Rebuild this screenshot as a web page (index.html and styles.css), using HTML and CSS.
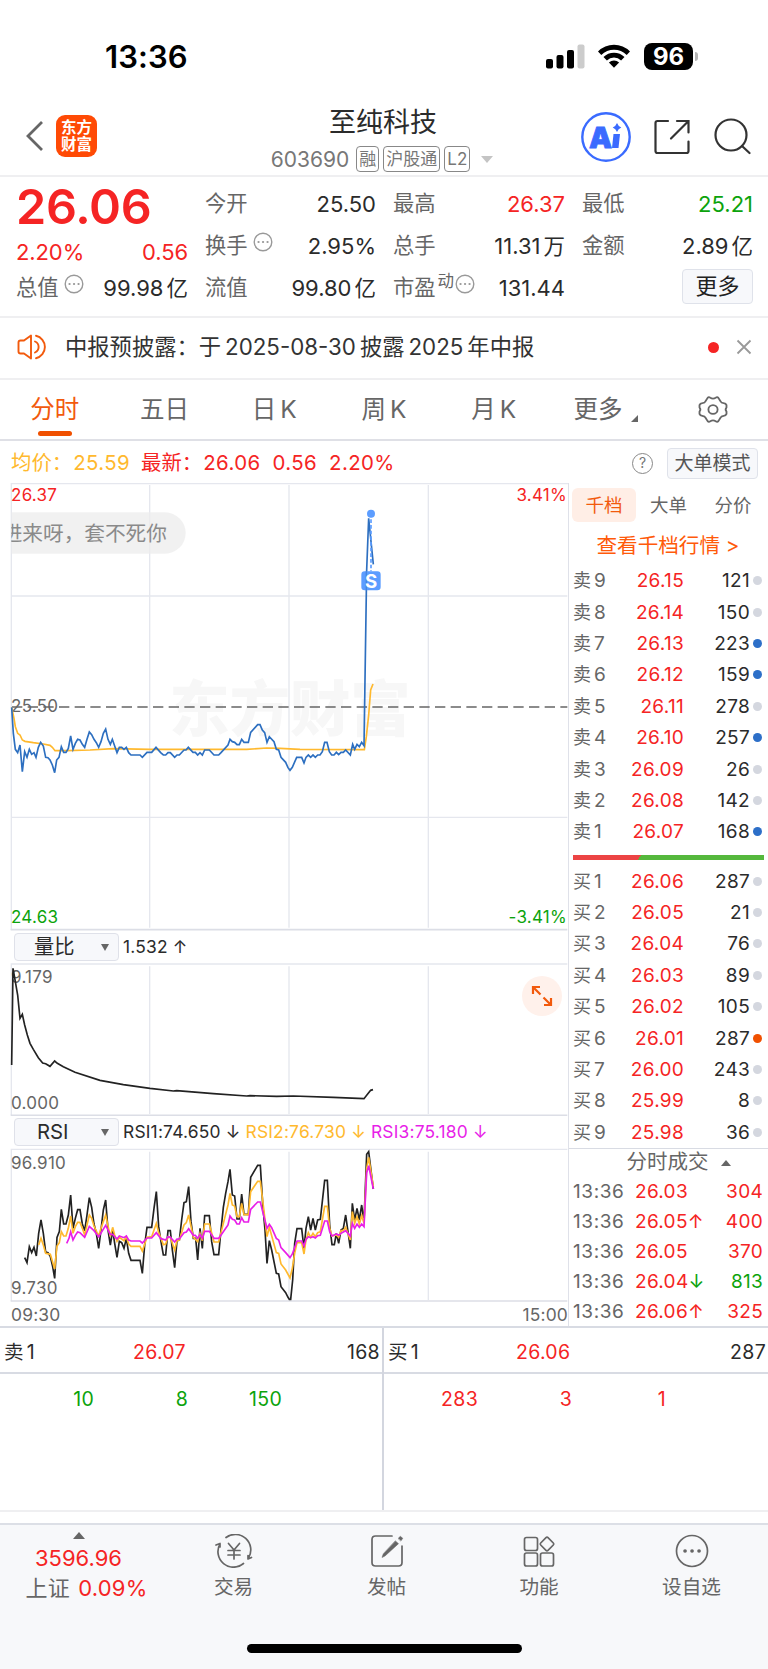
FILE: index.html
```html
<!DOCTYPE html>
<html lang="zh-CN">
<head>
    <meta charset="UTF-8">
    <meta name="viewport" content="width=device-width, initial-scale=1.0">
    <title>至纯科技 603690</title>
    <link rel="stylesheet" href="styles.css">
</head>

<body>
    <div class="status-bar">
        <span class="clock">13:36</span>
        <div class="status-icons">
            <svg class="signal" width="39" height="25" viewBox="0 0 39 25">
                <rect x="0" y="15" width="7" height="9.500" rx="2"/>
                <rect x="10.500" y="11" width="7" height="13.500" rx="2"/>
                <rect x="21" y="6" width="7" height="18.500" rx="2"/>
                <rect x="31.500" y="0.500" width="7" height="24" rx="2" fill="#ccc"/>
            </svg>
            <svg class="wifi" width="34" height="25" viewBox="0 0 34 25">
                <path d="M1 8.500a22.600 22.600 0 0 1 32 0l-3.300 3.400a18 18 0 0 0-25.400 0z"/>
                <path d="M6.500 14a14.800 14.800 0 0 1 21 0l-3.400 3.400a10.200 10.200 0 0 0-14.200 0z"/>
                <path d="M11.900 19.500a7.300 7.300 0 0 1 10.200 0L17 24.800z"/>
            </svg>
            <span class="battery">96</span><span class="battery-tip"></span>
        </div>
    </div>

    <header class="header">
        <div class="header-left">
            <svg width="20" height="34" viewBox="0 0 20 34"><path d="M17 3L3 17l14 14" fill="none" stroke="#666" stroke-width="2.800"/></svg>
            <div class="logo">东方<br>财富</div>
        </div>
        <div class="header-title">
            <h1>至纯科技</h1>
            <div class="code-row">
                <span class="code">603690</span>
                <span class="tag">融</span>
                <span class="tag">沪股通</span>
                <span class="tag">L2</span>
                <span class="arrow-down"></span>
            </div>
        </div>
        <div class="header-actions">
            <svg width="52" height="52" viewBox="0 0 52 52">
                <circle cx="26" cy="26" r="23.700" fill="none" stroke="#3a6bff" stroke-width="2.400"/>
                <text x="9" y="36.500" class="ai-text">A</text>
                <path d="M33.500 23h6.500l-1.500 14h-6.500z" fill="#3a6bff"/>
                <path d="M37 12q1.200 3.300 4.300 4.500-3.100 1.200-4.300 4.500-1.200-3.300-4.300-4.500 3.100-1.200 4.300-4.500z" fill="#3a6bff"/>
            </svg>
            <svg width="36" height="36" viewBox="0 0 36 36" fill="none" stroke="#333" stroke-width="2.200" stroke-linecap="round">
                <path d="M14 2H3.500Q1.500 2 1.500 4v28q0 2 2 2h29q2 0 2-2V22.500"/>
                <path d="M23 2h11.500v11.500M34 2.500L17 19.500"/>
            </svg>
            <svg class="search" width="37" height="37" viewBox="0 0 37 37" fill="none" stroke="#333" stroke-width="2.200" stroke-linecap="round">
                <circle cx="17" cy="17" r="15.500"/>
                <path d="M28 28l7.500 7"/>
            </svg>
        </div>
    </header>

    <section class="quote">
        <div class="quote-main">
            <div class="price red">26.06</div>
            <div class="cell red change"><span>2.20%</span><span>0.56</span></div>
            <div class="cell"><label>总值</label><svg class="info" viewBox="0 0 20 20"><circle cx="10" cy="10" r="8.800"/><path d="M5.500 10h.1M10 10h.1M14.500 10h.1"/></svg><b>99.98<i>亿</i></b></div>
        </div>
        <div class="quote-grid">
            <div class="cell"><label>今开</label><b>25.50</b></div>
            <div class="cell"><label>最高</label><b class="red">26.37</b></div>
            <div class="cell"><label>最低</label><b class="green">25.21</b></div>
            <div class="cell"><label>换手</label><svg class="info wide" viewBox="0 0 20 20"><circle cx="10" cy="10" r="8.800"/><path d="M5.500 10h.1M10 10h.1M14.500 10h.1"/></svg><b>2.95%</b></div>
            <div class="cell"><label>总手</label><b>11.31<i>万</i></b></div>
            <div class="cell"><label>金额</label><b>2.89<i>亿</i></b></div>
            <div class="cell"><label>流值</label><b>99.80<i>亿</i></b></div>
            <div class="cell"><label>市盈</label><sup>动</sup><svg class="info tight" viewBox="0 0 20 20"><circle cx="10" cy="10" r="8.800"/><path d="M5.500 10h.1M10 10h.1M14.500 10h.1"/></svg><b>131.44</b></div>
            <div class="cell"><button class="more-btn">更多</button></div>
        </div>
    </section>

    <section class="notice">
        <svg width="31" height="26" viewBox="0 0 31 26" fill="none" stroke="#f25a0d" stroke-width="1.900" stroke-linecap="round" stroke-linejoin="round">
            <path d="M14 1.500v23l-7-5H3.500q-2 0-2-2v-9q0-2 2-2H7z"/>
            <path d="M18 7.500a6 6 0 0 1 0 11M19 1.800a11.500 11.500 0 0 1 0 22.400"/>
        </svg>
        <span class="notice-text">中报预披露：<i>于</i><i>2025-08-30</i><i>披露</i><i>2025</i><i>年中报</i></span>
        <span class="red-dot"></span>
        <svg width="16" height="16" viewBox="0 0 16 16"><path d="M1.500 1.500l13 13M14.500 1.500l-13 13" stroke="#999" stroke-width="1.800"/></svg>
    </section>

    <nav class="tabs">
        <span class="active">分时</span>
        <span>五日</span>
        <span>日<i>K</i></span>
        <span>周<i>K</i></span>
        <span>月<i>K</i></span>
        <span class="tab-more">更多<em></em></span>
        <span>
            <svg width="30" height="29" viewBox="1 0 28 28" preserveAspectRatio="none" fill="none" stroke="#666" stroke-width="1.700" stroke-linejoin="round">
                <path d="M10 2.800Q11 1.500 12.500 2.600Q15 4.200 17.500 2.600Q19 1.500 20 2.800L22 6Q22.600 7.600 25 7.900Q27 8 27.600 9.800L27.600 12Q26 14 27.600 16L27.600 18.200Q27 20 25 20.100Q22.600 20.400 22 22L20 25.200Q19 26.500 17.500 25.400Q15 23.800 12.500 25.400Q11 26.500 10 25.200L8 22Q7.400 20.400 5 20.100Q3 20 2.400 18.200L2.400 16Q4 14 2.400 12L2.400 9.800Q3 8 5 7.900Q7.400 7.600 8 6z"/>
                <circle cx="15" cy="14" r="4.300"/>
            </svg>
        </span>
    </nav>

    <div class="legend">
        <span class="yellow">均价：<i>25.59</i></span>
        <span class="bright">最新：<i>26.06</i><i>0.56</i><i>2.20%</i></span>
        <span class="help">?</span>
        <button class="mode-btn">大单模式</button>
    </div>

    <main class="board">
        <div class="charts">
            <!-- chart units: 3 per pixel -->
            <svg class="chart" width="568" height="448" viewBox="0 39 1704 1344">
                <text x="508" y="782" class="watermark">东方财富</text>
                <g class="grid">
                    <path d="M32 41H1704M34 41V1380M449 45V1373M867 45V1373M1285 45V1373M34 378H1702M34 1042H1702"/>
                    <path d="M32 1379H1702" class="base"/>
                </g>
                <path d="M36 711H1702" stroke="#666" stroke-width="5" stroke-dasharray="31 16"/>
                <path d="M34 127H495A62 62 0 0 1 495 251H34z" fill="#ececec" opacity=".75"/>
                <svg x="34" y="127" width="530" height="124" viewBox="34 127 530 124">
                    <text x="5" y="212" class="bubble-text">进来呀，套不死你</text>
                </svg>
                <text x="33" y="94" class="label lred">26.37</text>
                <text x="1701" y="94" class="label lred" text-anchor="end">3.41%</text>
                <text x="33" y="725" class="label">25.50</text>
                <text x="33" y="1359" class="label lgreen">24.63</text>
                <text x="1701" y="1359" class="label lgreen" text-anchor="end">-3.41%</text>
                <polyline class="line" stroke="#ffb92e" points="35,712 42,745 46,770 53,790 60,795 67,810 75,814 100,818 130,822 150,826 157,832 165,842 200,842 270,840 340,836 450,838 740,838 800,834 840,835 900,838 1093,839 1099,800 1106,735 1112,660 1119,642"/>
                <polyline class="line" stroke="#2d6fc0" points="35,712 40,790 46,838 53,848 60,825 67,905 74,845 81,862 88,838 95,853 102,848 108,862 115,832 122,817 130,828 137,862 144,863 150,870 157,885 164,908 170,870 177,862 184,830 191,847 198,847 205,835 212,798 219,838 226,820 233,808 240,810 247,823 254,832 261,808 268,786 275,794 282,808 289,818 296,832 303,815 310,790 317,777 324,808 331,823 337,808 344,828 351,848 358,832 365,832 372,838 379,832 386,848 393,855 420,855 427,862 441,847 455,847 468,832 482,848 490,855 497,855 504,848 511,848 524,862 531,855 538,855 552,840 558,840 565,832 579,847 586,847 593,855 600,848 607,855 614,840 628,840 642,855 656,855 663,848 684,825 690,808 697,815 704,817 711,824 718,824 725,808 732,817 745,817 752,787 773,764 780,764 787,780 794,788 801,817 808,800 822,815 829,838 836,840 843,862 857,877 864,893 870,901 877,892 890,862 905,862 912,879 918,862 925,855 932,862 939,855 946,862 953,855 960,855 967,845 974,817 981,817 988,845 995,855 1002,855 1009,847 1016,854 1023,847 1030,847 1037,840 1051,855 1058,823 1064,838 1071,823 1078,830 1085,817 1092,827 1100,300 1106,145 1120,283"/>
                <path d="M1113 131V304" stroke="#5c9dff" stroke-width="5" stroke-dasharray="11 6"/>
                <circle cx="1113" cy="131" r="12" fill="#5c9dff"/>
                <rect x="1084" y="304" width="58" height="57" rx="10" fill="#5c9dff"/>
                <path d="M1099 304V361" stroke="#2d6fc0" stroke-width="4" opacity=".5"/>
                <text x="1113" y="353" class="badge-text">S</text>
            </svg>

            <div class="indicator">
                <span class="select">量比<em></em></span>
                <span>1.532 ↑</span>
            </div>
            <div class="sub-chart">
                <svg class="chart" width="568" height="153" viewBox="0 249 1704 459">
                    <g class="grid">
                        <path d="M32 252H1702M34 252V705M449 259V702M867 259V702M1285 259V702"/>
                        <path d="M32 706H1702" class="base"/>
                    </g>
                    <text x="33" y="309" class="label">9.179</text>
                    <text x="33" y="686" class="label">0.000</text>
                    <polyline class="line" stroke="#222" points="35,555 39,265 46,305 53,345 60,415 67,403 74,435 82,465 90,490 100,508 115,533 128,549 137,551 150,559 164,543 172,550 190,560 225,577 300,601 370,614 450,625 520,633 530,632 640,641 740,648 750,647 830,649 880,648 1000,652 1092,656 1100,646 1112,631 1119,629"/>
                </svg>
                <span class="expand">
                    <svg width="22" height="22" viewBox="0 0 22 22" fill="none" stroke="#f25a0d" stroke-width="2.200"><path d="M2 9V2h7M2.500 2.500l7 7M20 13v7h-7M19.500 19.500l-7-7"/></svg>
                </span>
            </div>

            <div class="indicator rsi">
                <span class="select">RSI<em></em></span>
                <span>RSI1:74.650 ↓</span>
                <span class="yellow">RSI2:76.730 ↓</span>
                <span class="magenta">RSI3:75.180 ↓</span>
            </div>
            <svg class="chart" width="568" height="154" viewBox="0 84 1704 462">
                <g class="grid">
                    <path d="M32 88H1702M34 88V543M449 95V540M867 95V540M1285 95V540"/>
                    <path d="M32 543H1702" class="base"/>
                </g>
                <text x="33" y="146" class="label">96.910</text>
                <text x="33" y="522" class="label">9.730</text>
                <polyline class="line" stroke="#222" points="74,413 81,428 88,380 95,398 102,382 109,408 116,340 123,300 130,340 137,396 144,398 151,410 158,440 164,475 171,352 178,335 184,268 191,312 198,312 205,285 212,225 219,325 226,295 233,269 240,269 247,312 254,332 261,285 268,233 275,262 282,312 289,340 296,385 303,330 310,270 317,240 324,330 331,375 338,330 344,370 351,412 358,364 365,368 372,385 379,355 386,400 393,421 420,421 427,460 434,375 441,322 455,322 462,265 469,215 476,320 483,365 490,405 497,405 504,332 511,332 517,390 524,443 531,362 538,360 545,300 552,248 559,245 566,200 573,305 580,355 587,355 593,420 600,325 607,385 614,287 628,287 635,365 642,404 656,404 663,330 670,262 677,220 684,185 690,148 697,225 704,228 711,297 718,297 725,222 732,283 745,283 752,172 773,136 781,136 788,250 795,330 801,430 808,362 815,390 829,460 836,462 843,500 857,518 864,532 868,538 872,538 878,480 884,370 891,326 905,326 912,385 918,325 925,290 932,330 939,295 946,330 953,300 961,298 968,235 974,181 982,181 989,315 996,374 1003,374 1009,340 1016,370 1023,330 1030,325 1037,285 1051,385 1057,250 1064,300 1071,265 1078,300 1085,255 1092,305 1100,103 1106,95 1120,207"/>
                <polyline class="line" stroke="#ffb92e" points="116,375 123,355 130,375 137,400 151,403 164,447 171,378 178,368 184,335 191,348 198,348 205,325 212,288 219,340 226,320 233,307 240,307 247,325 254,345 261,315 268,285 275,295 282,318 296,348 303,325 317,285 331,350 338,322 344,345 351,364 358,352 372,362 379,350 386,372 393,379 420,379 427,393 441,352 455,350 469,310 476,338 490,374 497,372 504,350 511,352 524,390 531,362 538,360 552,315 559,308 566,285 580,352 593,365 600,340 607,362 614,312 628,312 642,366 656,366 670,310 684,255 690,220 697,255 704,258 711,290 718,290 725,250 732,284 745,284 752,215 773,184 781,184 788,240 801,350 808,322 829,398 836,400 843,432 857,450 870,474 877,445 884,400 891,368 905,368 912,402 918,360 925,338 932,352 939,340 946,350 953,338 961,335 967,300 974,259 982,259 989,325 996,348 1009,345 1016,352 1023,332 1030,332 1037,322 1051,360 1057,275 1064,310 1071,290 1078,312 1085,287 1092,310 1100,145 1106,112 1120,200"/>
                <polyline class="line" stroke="#e81fe8" points="200,370 207,355 212,335 219,360 226,346 233,336 240,338 254,352 268,319 282,332 296,350 317,316 331,343 338,343 351,357 358,348 372,353 379,348 386,360 393,363 420,363 427,369 441,354 455,354 469,338 483,356 497,360 504,350 511,352 524,366 531,357 538,357 552,338 559,336 566,326 580,346 586,346 593,355 600,344 607,355 614,334 628,334 642,355 656,355 670,335 684,315 690,288 697,298 704,300 711,312 718,312 725,293 732,306 745,306 752,268 773,246 781,246 788,275 801,325 808,313 815,323 829,355 836,360 843,383 857,398 870,413 877,402 891,363 905,363 912,378 918,358 925,350 932,353 939,350 946,354 953,347 961,346 974,303 982,303 989,335 996,348 1009,342 1016,346 1023,340 1037,332 1051,348 1057,310 1064,325 1071,312 1078,322 1085,312 1092,320 1100,158 1106,137 1120,207"/>
            </svg>
            <div class="time-axis"><span>09:30</span><span>15:00</span></div>
        </div>

        <aside class="book">
            <div class="book-tabs"><span class="on">千档</span><span>大单</span><span>分价</span></div>
            <div class="book-link">查看千档行情 &gt;</div>
            <div class="levels">
                <div class="level"><span>卖<i>9</i></span><b>26.15</b><strong>121</strong><em></em></div>
                <div class="level"><span>卖<i>8</i></span><b>26.14</b><strong>150</strong><em></em></div>
                <div class="level"><span>卖<i>7</i></span><b>26.13</b><strong>223</strong><em class="blue"></em></div>
                <div class="level"><span>卖<i>6</i></span><b>26.12</b><strong>159</strong><em class="blue"></em></div>
                <div class="level"><span>卖<i>5</i></span><b>26.11</b><strong>278</strong><em></em></div>
                <div class="level"><span>卖<i>4</i></span><b>26.10</b><strong>257</strong><em class="blue"></em></div>
                <div class="level"><span>卖<i>3</i></span><b>26.09</b><strong>26</strong><em></em></div>
                <div class="level"><span>卖<i>2</i></span><b>26.08</b><strong>142</strong><em></em></div>
                <div class="level"><span>卖<i>1</i></span><b>26.07</b><strong>168</strong><em class="blue"></em></div>
            </div>
            <div class="ratio"></div>
            <div class="levels">
                <div class="level"><span>买<i>1</i></span><b>26.06</b><strong>287</strong><em></em></div>
                <div class="level"><span>买<i>2</i></span><b>26.05</b><strong>21</strong><em></em></div>
                <div class="level"><span>买<i>3</i></span><b>26.04</b><strong>76</strong><em></em></div>
                <div class="level"><span>买<i>4</i></span><b>26.03</b><strong>89</strong><em></em></div>
                <div class="level"><span>买<i>5</i></span><b>26.02</b><strong>105</strong><em></em></div>
                <div class="level"><span>买<i>6</i></span><b>26.01</b><strong>287</strong><em class="orange"></em></div>
                <div class="level"><span>买<i>7</i></span><b>26.00</b><strong>243</strong><em></em></div>
                <div class="level"><span>买<i>8</i></span><b>25.99</b><strong>8</strong><em></em></div>
                <div class="level"><span>买<i>9</i></span><b>25.98</b><strong>36</strong><em></em></div>
            </div>
            <div class="deals-title">分时成交<em></em></div>
            <div class="deal"><span>13:36</span><b>26.03</b><strong>304</strong></div>
            <div class="deal"><span>13:36</span><b>26.05<i>↑</i></b><strong>400</strong></div>
            <div class="deal"><span>13:36</span><b>26.05</b><strong>370</strong></div>
            <div class="deal"><span>13:36</span><b>26.04<i class="green">↓</i></b><strong class="green">813</strong></div>
            <div class="deal"><span>13:36</span><b>26.06<i>↑</i></b><strong>325</strong></div>
        </aside>
    </main>

    <section class="queue">
        <div class="queue-side sell">
            <div class="queue-head"><span>卖<i>1</i></span><b>26.07</b><span>168</span></div>
            <div class="queue-row green"><span>10</span><span>8</span><span>150</span></div>
        </div>
        <div class="queue-side buy">
            <div class="queue-head"><span>买<i>1</i></span><b>26.06</b><span>287</span></div>
            <div class="queue-row"><span>283</span><span>3</span><span>1</span></div>
        </div>
    </section>

    <footer class="bottom-bar">
        <div class="index">
            <em></em>
            <span class="index-value">3596.96</span>
            <span class="index-change">上证 <b>0.09%</b></span>
        </div>
        <div class="item">
            <svg width="38" height="34" viewBox="0 0 38 34" fill="none" stroke="#666" stroke-width="1.700" stroke-linecap="round" stroke-linejoin="round">
                <path d="M11 3.500A15.500 15.500 0 0 1 33.500 24M33 21.500v3.500l3.500-1.500M28.500 29.500A15.500 15.500 0 0 1 5 10M1 11l4-1.500v3.500"/>
                <path d="M13.500 9.500l5.500 6.500 5.500-6.500M13 16.500h12M13 21h12M19 16v9"/>
            </svg>
            <span>交易</span>
        </div>
        <div class="item">
            <svg width="34" height="34" viewBox="0 0 34 34" fill="none" stroke="#666" stroke-width="1.700" stroke-linecap="round">
                <path d="M22 2H5.500Q2 2 2 5.500v23Q2 32 5.500 32h23q3.500 0 3.500-3.500V12"/>
                <path d="M25.500 7l3 2.700L15 22l-3 1.500 1.200-3.500zM28.300 4.300l2-2 2.500 2-1.800 2.500z" fill="#666" stroke-width=".5"/>
            </svg>
            <span>发帖</span>
        </div>
        <div class="item">
            <svg width="34" height="34" viewBox="0 0 34 34" fill="none" stroke="#666" stroke-width="1.700" stroke-linejoin="round">
                <rect x="2.500" y="3.500" width="13" height="13" rx="2"/>
                <rect x="2.500" y="19" width="13" height="13" rx="2"/>
                <rect x="18.500" y="19" width="13" height="13" rx="2"/>
                <path d="M24 3.700q1-1 2 0l5.300 5.300q1 1 0 2L26 16.300q-1 1-2 0L18.700 11q-1-1 0-2z"/>
            </svg>
            <span>功能</span>
        </div>
        <div class="item">
            <svg width="34" height="34" viewBox="0 0 34 34" fill="none" stroke="#666" stroke-width="1.700">
                <circle cx="17" cy="17" r="15.500"/>
                <path d="M10 17h.1M17 17h.1M24 17h.1" stroke-width="3.600" stroke-linecap="round"/>
            </svg>
            <span>设自选</span>
        </div>
        <div class="home-indicator"></div>
    </footer>
</body>
</html>
```
FILE: styles.css
```css
* {
    box-sizing: border-box;
}

body {
    width: 768px;
    height: 1669px;
    margin: 0;
    overflow: hidden;
    background: #fff;
    color: #2b2b2b;
    font-family: Inter, "Noto Sans CJK SC", sans-serif;
    font-size: 22px;
    line-height: 1;
}

i, em, b, strong {
    font-style: normal;
    font-weight: normal;
}

button {
    padding: 0;
    border: 1px solid #dfe2ea;
    border-radius: 4px;
    background: #f7f8fb;
    font-family: inherit;
    line-height: 1;
}

svg {
    display: block;
    flex: none;
}

.red { color: #f52424; }
.green { color: #0ca30c; }
.yellow { color: #ffb92e; }
.magenta { color: #e81fe8; }

/* status bar */
.status-bar {
    display: flex;
    justify-content: space-between;
    height: 100px;
    padding: 42px 70px 0 105px;
}

.clock {
    height: 30px;
    font-size: 31px;
    font-weight: 600;
    line-height: 30px;
    letter-spacing: 0.1px;
    color: #000;
}

.status-icons {
    display: flex;
    align-items: center;
    height: 29px;
}

.wifi {
    margin: -3px 13px 0 12px;
}

.battery {
    width: 49px;
    height: 27px;
    border-radius: 8px;
    background: #000;
    color: #fff;
    font-size: 24px;
    font-weight: 700;
    line-height: 27px;
    text-align: center;
}

.battery-tip {
    width: 3px;
    height: 9px;
    margin-left: 2px;
    border-radius: 0 4px 4px 0;
    background: #b5b5b5;
}

/* header */
.header {
    display: grid;
    grid-template-columns: 240px 1fr 240px;
    height: 77px;
    border-bottom: 2px solid #efeff1;
}

.header-left {
    display: flex;
    align-items: center;
    gap: 11px;
    padding: 0 0 3px 25px;
}

.logo {
    width: 41px;
    height: 42px;
    padding-top: 5px;
    border-radius: 9px;
    background: #ff4a05;
    color: #fff;
    font-size: 15.5px;
    font-weight: 700;
    line-height: 16.5px;
    text-align: center;
}

.header-title {
    display: flex;
    flex-direction: column;
    align-items: center;
    padding-top: 8px;
}

.header-title h1 {
    margin: 0 2px 9px 0;
    font-size: 27px;
    font-weight: 400;
    line-height: 29px;
}

.code-row {
    display: flex;
    align-items: center;
    gap: 4px;
    height: 26px;
    margin-right: 4px;
    color: #777;
}

.code {
    margin-right: 3px;
    font-size: 21px;
}

.tag {
    height: 26px;
    padding: 0 2px;
    border: 1px solid #888;
    border-radius: 4px;
    font-size: 17px;
    line-height: 24px;
}

.arrow-down {
    margin: 0 0 0 7px;
    border: 6px solid transparent;
    border-top: 7px solid #c4c4c4;
    border-bottom: 0;
}

.header-actions {
    display: flex;
    align-items: center;
    justify-content: flex-end;
    gap: 22px;
    padding: 0 17px 2px 0;
}

.header-actions .search {
    margin-left: 2px;
}

.ai-text {
    fill: #3a6bff;
    stroke: #3a6bff;
    stroke-width: 0.8;
    font-size: 29px;
    font-weight: 900;
}

/* quote */
.quote {
    display: flex;
    height: 141px;
    padding: 6px 14px 0 16px;
    border-bottom: 2px solid #efeff1;
}

.quote-main {
    width: 172px;
    margin-right: 17px;
}

.price {
    height: 48px;
    font-size: 48.5px;
    font-weight: 600;
    line-height: 48px;
    letter-spacing: -0.3px;
}

.quote-grid {
    display: grid;
    grid-template-columns: 171px 172px 171px;
    column-gap: 17px;
    grid-auto-rows: 42px;
}

.cell {
    display: flex;
    align-items: center;
    height: 42px;
    font-size: 22px;
}

.change {
    justify-content: space-between;
    letter-spacing: -0.1px;
}

.quote-main .cell + .cell {
    margin-top: -6px;
}

.cell label {
    color: #666;
    font-size: 21.3px;
}

.cell b {
    margin-left: auto;
}

.cell b i {
    margin-left: 3px;
    font-size: 21.5px;
}

.cell sup {
    margin: -14px 0 0 2px;
    color: #666;
    font-size: 16.5px;
}

.info {
    width: 20px;
    height: 20px;
    margin: -9px 0 0 5px;
    fill: none;
    stroke: #999;
    stroke-width: 1.4;
}

.info path {
    stroke-width: 2.2;
    stroke-linecap: round;
}

.info.tight {
    margin-left: 1px;
}

.more-btn {
    width: 71px;
    height: 35px;
    margin: -4px 0 0 auto;
    color: #222;
    font-size: 22px;
}

/* notice */
.notice {
    display: flex;
    align-items: center;
    height: 62px;
    padding: 0 16px 2px 17px;
    border-bottom: 2px solid #efeff1;
}

.notice-text {
    flex: 1;
    margin-left: 17px;
    color: #333;
    font-size: 22.3px;
}

.notice-text i + i {
    margin-left: 4px;
}

.red-dot {
    width: 11px;
    height: 11px;
    margin-right: 17px;
    border-radius: 50%;
    background: #f52424;
}

/* period tabs */
.tabs {
    display: grid;
    grid-template-columns: repeat(7, 1fr);
    height: 61px;
    border-bottom: 2px solid #dfe0e6;
    color: #666;
    font-size: 24.5px;
}

.tabs span {
    display: flex;
    flex-direction: column;
    align-items: center;
    justify-content: center;
    height: 59px;
}

.tabs span:not(.active) {
    flex-direction: row;
}

.tabs i {
    margin-left: 4px;
}

.tabs .active {
    gap: 10px;
    padding-top: 14px;
    color: #f25a0d;
}

.tabs .active::after {
    width: 34px;
    height: 5px;
    border-radius: 3px;
    background: #f05000;
    content: "";
}

.tabs .tab-more {
    padding-left: 5px;
}

.tab-more em {
    margin: 18px 0 0 9px;
    border-bottom: 7px solid #666;
    border-left: 7px solid transparent;
}

/* legend */
.legend {
    display: flex;
    align-items: center;
    height: 42px;
    padding: 2px 10px 0 11px;
    font-size: 20.4px;
}

.legend i {
    margin: 0 11px 0 1px;
    letter-spacing: 0.4px;
}

.bright {
    color: #f52424;
}

.help {
    width: 21px;
    height: 21px;
    margin: 0 14px 0 auto;
    border: 1.5px solid #888;
    border-radius: 50%;
    color: #777;
    font-size: 14px;
    line-height: 18px;
    text-align: center;
}

.mode-btn {
    width: 91px;
    height: 31px;
    color: #555;
    font-size: 19px;
}

/* charts */
.board {
    display: flex;
    height: 845px;
    border-bottom: 2px solid #d8dbe3;
}

.charts {
    width: 568px;
}

.grid path {
    fill: none;
    stroke: #e5e7ee;
    stroke-width: 4;
}

.grid .base {
    stroke: #dcdee6;
    stroke-width: 5;
}

.line {
    fill: none;
    stroke-width: 5;
    stroke-linejoin: miter;
}

.label {
    fill: #666;
    font-size: 51px;
    letter-spacing: 0.8px;
}

.lred { fill: #f52424; }
.lgreen { fill: #0ca30c; }

.watermark {
    fill: #f7f7f7;
    font-size: 181px;
    font-weight: 900;
}

.bubble-text {
    fill: #8a8a8a;
    font-size: 62px;
}

.badge-text {
    fill: #fff;
    font-size: 56px;
    font-weight: 700;
    text-anchor: middle;
}

.indicator {
    display: flex;
    align-items: center;
    gap: 5px;
    height: 32px;
    padding-left: 14px;
    font-size: 17.4px;
    letter-spacing: 0.2px;
}

.select {
    display: flex;
    align-items: center;
    width: 105px;
    height: 28px;
    margin-right: -1px;
    padding-left: 19px;
    border: 1px solid #dfe1e9;
    border-radius: 4px;
    background: #f7f8fb;
    font-size: 20.3px;
    letter-spacing: 0;
}

.select em {
    margin: 0 9px 0 auto;
    border: 4.5px solid transparent;
    border-top: 7px solid #666;
    border-bottom: 0;
}

.rsi .select {
    padding-left: 22px;
}

.sub-chart {
    position: relative;
}

.expand {
    position: absolute;
    top: 13px;
    right: 6px;
    display: flex;
    align-items: center;
    justify-content: center;
    width: 40px;
    height: 40px;
    border-radius: 50%;
    background: #fff1eb;
}

.time-axis {
    display: flex;
    justify-content: space-between;
    padding: 4px 0 0 11px;
    color: #666;
    font-size: 17.4px;
    letter-spacing: 0.2px;
}

/* order book */
.book {
    width: 200px;
    padding: 0 4px 0 3px;
    border-left: 1px solid #dfe1e9;
}

.book-tabs {
    display: grid;
    grid-template-columns: 64px 65px 64px;
    align-items: center;
    height: 34px;
    margin-top: 5px;
    color: #666;
    font-size: 18.5px;
    text-align: center;
}

.book-tabs .on {
    border-radius: 6px;
    background: #ffeee6;
    color: #f25a0d;
    line-height: 34px;
}

.book-link {
    height: 43px;
    color: #ff5a0a;
    font-size: 20.6px;
    line-height: 48px;
    text-align: center;
}

.level {
    display: grid;
    grid-template-columns: 45px 66px 66px 9px;
    align-items: center;
    height: 31.4px;
    padding-left: 1px;
    font-size: 19px;
    letter-spacing: 0.3px;
}

.level span {
    color: #666;
    font-size: 18px;
    letter-spacing: 0;
}

.level span i {
    margin-left: 3px;
    font-size: 19px;
}

.level b,
.level strong {
    text-align: right;
}

.level b,
.deal {
    color: #f52424;
}

.level em {
    width: 9px;
    height: 9px;
    margin-left: 3px;
    border-radius: 50%;
    background: #d4d7df;
}

.level .blue { background: #2d6fc8; }
.level .orange { background: #f05000; }

.ratio {
    height: 5px;
    margin: 7px 0 6px 1px;
    background: linear-gradient(125deg, #ec4444 35%, #55b83c 35%);
}

.deals-title {
    display: flex;
    align-items: center;
    justify-content: center;
    height: 28px;
    margin: 0 -4px 0 -3px;
    padding-left: 20px;
    border-top: 1px solid #d8dbe3;
    color: #666;
    font-size: 20.5px;
}

.deals-title em {
    margin-left: 12px;
    border: 5px solid transparent;
    border-top: 0;
    border-bottom: 6px solid #666;
}

.deal {
    display: grid;
    grid-template-columns: 62px 82px 1fr;
    align-items: center;
    height: 30.2px;
    padding: 0 1px;
    font-size: 19px;
    letter-spacing: 0.3px;
}

.deal span {
    color: #666;
    letter-spacing: 0.6px;
}

.deal strong {
    text-align: right;
}

/* queue */
.queue {
    display: flex;
    height: 184px;
    border-bottom: 2px solid #efeff1;
    font-size: 19.5px;
    letter-spacing: 0.3px;
}

.queue-side {
    width: 384px;
}

.sell {
    border-right: 2px solid #d3d6df;
}

.queue-head {
    display: grid;
    grid-template-columns: 129px 1fr auto;
    align-items: center;
    height: 46px;
    padding: 6px 2px 0 4px;
    border-bottom: 2px solid #d8dbe3;
}

.queue-head i {
    margin-left: 3px;
}

.queue-head b {
    color: #f52424;
}

.buy .queue-head {
    grid-template-columns: 128px 1fr auto;
}

.queue-row {
    display: grid;
    grid-template-columns: 94px 94px 94px;
    padding-top: 15px;
    color: #f52424;
    line-height: 20px;
    text-align: right;
}

.queue-row.green {
    color: #0ca30c;
}

/* bottom bar */
.bottom-bar {
    display: grid;
    grid-template-columns: 157px 153px 153px 152px 153px;
    align-content: start;
    height: 146px;
    margin-top: 11px;
    border-top: 2px solid #dcdfe6;
    background: #f7f8fa;
    color: #666;
}

.index {
    display: flex;
    flex-direction: column;
    align-items: center;
}

.index em {
    margin-top: 7px;
    border: 6px solid transparent;
    border-top: 0;
    border-bottom: 7px solid #666;
}

.index-value {
    margin: 8px 0;
    color: #f52424;
    font-size: 22px;
}

.index-change {
    margin-left: 16px;
    letter-spacing: 0.2px;
}

.index-change b {
    margin-left: 2px;
    color: #f52424;
}

.item {
    display: flex;
    flex-direction: column;
    align-items: center;
    gap: 10px;
    height: 101px;
    padding-top: 9px;
    font-size: 19.6px;
}

.home-indicator {
    grid-column: 1 / -1;
    justify-self: center;
    width: 275px;
    height: 9px;
    margin-top: 18px;
    border-radius: 5px;
    background: #000;
}
```
